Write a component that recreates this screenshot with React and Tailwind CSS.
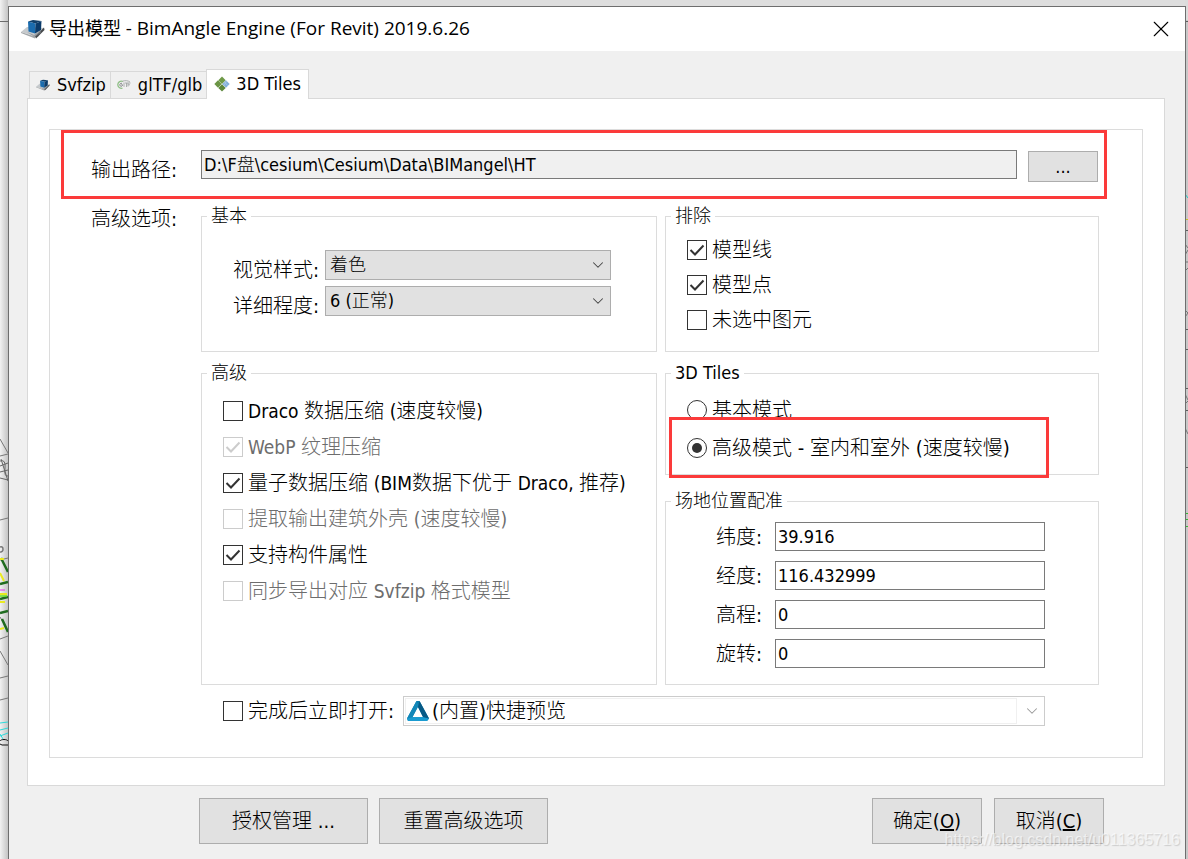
import { useId, useState } from "react";
import { ChevronDown, X } from "lucide-react";

const LATIN = /([A-Za-z0-9(),.\-][A-Za-z0-9(),.\- ]*)/;

// Latin runs are set at their own size next to the Chinese text around them.
function Mixed({ children, latin = "text-[19px]" }) {
  return children.split(LATIN).map((part, i) =>
    i % 2 ? (
      <span key={i} className={latin}>
        {part}
      </span>
    ) : (
      part
    )
  );
}

function CubeIcon({ className }) {
  return (
    <svg viewBox="0 0 24 20" className={className} aria-hidden="true">
      <path d="M0 13 6 8 23 9 17 18Z" fill="#c6cacd" />
      <path d="M0 13 14 17.500 14 19.500 0 14Z" fill="#a2a6a9" />
      <path d="M14 17.500 23 8.500 23.500 11 15 19.500Z" fill="#45494c" />
      <path d="M6 13 13 16 20 11 20 14 13.500 18Z" fill="#7b7f83" opacity=".6" />
      <path d="M7 2.500 12 1 20.500 2 14.500 4.500Z" fill="#12406a" />
      <path d="M7 2.500 14.500 4.500 14 14.500 7.500 12.500Z" fill="#1b6cae" />
      <path d="M14.500 4.500 20.500 2 20 11 14 14.500Z" fill="#0b3b6a" />
    </svg>
  );
}

function GltfIcon({ className }) {
  return (
    <svg viewBox="0 0 14 10" className={className} aria-hidden="true" fill="none">
      <path d="M6 1.500C3 .5.8 2.500.8 4.700S3 8.800 5.500 8.200" stroke="#8fbf86" strokeWidth="1.300" />
      <path d="M5 3.300C3.500 3 2.500 4 2.800 5.200S4.800 6.800 5.500 5.500V4.800H4.300" stroke="#85898a" />
      <path d="M7 2.500V6.800M8 3H11M9.500 3V7M11 6.500V3H13.500M11 4.800H13M5.500 1.200C8 .3 11 .5 13 2" stroke="#a2a6a5" strokeWidth=".9" />
    </svg>
  );
}

function TilesIcon({ className }) {
  return (
    <svg viewBox="0 0 16 16" className={className} aria-hidden="true">
      <path d="M8 .5 11.700 4.200 8 7.900 4.300 4.200Z" fill="#6f9a48" />
      <path d="M4 4.300 7.700 8 4 11.700.3 8Z" fill="#6a9444" />
      <path d="M12 4.300 15.700 8 12 11.700 8.300 8Z" fill="#82b0dc" />
      <path d="M8 8.200 11.700 11.900 8 15.600 4.300 11.900Z" fill="#5c873b" />
      <path d="M10.500 6 13.500 9.500M12.500 5 10 9.500" stroke="#b9d0e4" strokeWidth=".6" />
    </svg>
  );
}

function TriangleIcon({ className }) {
  return (
    <svg viewBox="0 0 24 22" className={className} aria-hidden="true">
      <path d="M10.500 1H13.500L23 18.500 21 21H2L1 18.500ZM12 7 6.500 17H17Z" fillRule="evenodd" fill="#0c7cae" />
      <path d="M10.500 1 1 18.500 6.500 17 12.500 5Z" fill="#1287b8" />
      <path d="M1 18.500 2 21H21L23 18.500 17 17H6.500Z" fill="#1a9bd0" />
      <path d="M12 7 13.500 1 23 18.500 17 17Z" fill="#075a86" />
    </svg>
  );
}

function Backdrop() {
  return (
    <>
      <svg className="absolute left-0 top-0 h-[859px] w-2" viewBox="0 0 8 859" fill="none" aria-hidden="true">
        <defs>
          <linearGradient id="edge">
            <stop offset="0" stopColor="#f2f2f2" />
            <stop offset="1" stopColor="#c4c4c4" />
          </linearGradient>
        </defs>
        <path d="M0 0H8V859H0Z" fill="url(#edge)" />
        <path d="M0 21.500H8" stroke="#6b6b6b" />
        <path d="M0 439 8 453M0 456 8 454M0 520 8 518M0 560 8 558M0 617 5 625M0 639 8 636M0 651 8 665M0 678 8 676M0 700 8 698" stroke="#777" />
        <path d="M0 461Q6 459 5 468T8 476M0 466 8 463M0 472 8 470M1 459 8 481M0 478 8 480" stroke="#666" />
        <path d="M0 547C4 545 4 553 0 552" stroke="#777" strokeWidth="1.500" />
        <path d="M1 558 8 572M0 584 8 582M0 599 8 597M0 613 8 611M2 619 8 632" stroke="#1f6b1f" strokeWidth="2.500" />
        <path d="M0 559H4M0 573 4 581M0 594H7M0 602H5M0 629 4 628" stroke="#eaea20" strokeWidth="2" />
        <path d="M0 590H5" stroke="#e832e8" />
        <path d="M0 596H7" stroke="#63e01c" strokeWidth="1.500" />
        <path d="M0 723 8 722M0 730 8 728M0 736 8 733M0 734 3 739" stroke="#2edada" />
        <path d="M0 741C1 739 7 739 8 741M0 744 2 745H8" stroke="#111" />
      </svg>
      <svg className="absolute right-0 top-0 h-[859px] w-[3px]" viewBox="0 0 3 859" fill="none" aria-hidden="true">
        <path d="M0 0H3V859H0Z" fill="#c8c8c8" />
        <path d="M0 0H3V20H0Z" fill="#dcdcdc" />
        <path d="M0 21.500H3M0 230.500H3M0 329.500H3M0 349.500H3M0 388.500H3M0 410.500H3M0 467.500H3" stroke="#606060" />
        <path d="M0 244 3 248M0 255 3 250M0 262H3M0 271 3 268M0 310 3 313 0 317M0 394 3 400M0 404 3 401M0 428 3 434" stroke="#777" />
        <path d="M0 194 3 198" stroke="#20c8c8" />
        <path d="M0 219.500H3" stroke="#c8c820" />
        <path d="M0 513.500H3M0 519.500H3M0 526.500H3" stroke="#39b939" />
      </svg>
    </>
  );
}

function Group({ title, className = "", children }) {
  return (
    <fieldset className={`min-w-0 border border-[#dcdcdc] ${className}`}>
      <legend className="ml-[5px] px-1 text-[18px] leading-5">{title}</legend>
      {children}
    </fieldset>
  );
}

function Check({ label, defaultChecked, disabled }) {
  return (
    <label className={`flex h-5 items-center gap-[5px] whitespace-nowrap ${disabled ? "text-[#6d6d6d]" : ""}`}>
      <span className="relative flex size-5 shrink-0">
        <input
          type="checkbox"
          defaultChecked={defaultChecked}
          disabled={disabled}
          className="peer size-5 appearance-none border border-[#333] bg-white disabled:border-[#ccc]"
        />
        <svg
          viewBox="0 0 20 20"
          fill="none"
          aria-hidden="true"
          className="pointer-events-none absolute inset-0 hidden stroke-[#333] stroke-2 peer-checked:block peer-disabled:stroke-[#ccc]"
        >
          <path d="M3.500 10 8 14.500 16.500 5.500" />
        </svg>
      </span>
      <span>
        <Mixed>{label}</Mixed>
      </span>
    </label>
  );
}

function Radio({ label, defaultChecked }) {
  return (
    <label className="flex h-5 items-center gap-[5px] whitespace-nowrap">
      <span className="relative flex size-5 shrink-0">
        <input
          type="radio"
          name="mode"
          defaultChecked={defaultChecked}
          className="peer size-5 appearance-none rounded-full border border-[#333] bg-white"
        />
        <span className="pointer-events-none absolute inset-[5px] hidden rounded-full bg-[#333] peer-checked:block" />
      </span>
      <span>
        <Mixed latin="text-[20px]">{label}</Mixed>
      </span>
    </label>
  );
}

function SelectRow({ label, options }) {
  const id = useId();
  return (
    <div className="flex h-[30px] items-end">
      <label htmlFor={id} className="w-[92px] shrink-0 whitespace-nowrap leading-5">
        {label}
      </label>
      <div className="relative h-full flex-1">
        <select id={id} className="size-full appearance-none border border-[#adadad] bg-[#e1e1e1] pl-1 text-[18px]">
          {options.map((o) => (
            <option key={o}>{o}</option>
          ))}
        </select>
        <ChevronDown className="pointer-events-none absolute right-[4px] top-[6px] size-[18px] text-[#444]" strokeWidth={1.4} />
      </div>
    </div>
  );
}

function CoordRow({ label, value }) {
  const id = useId();
  return (
    <div className="flex h-[29px] items-center">
      <label htmlFor={id} className="w-[59px] shrink-0 whitespace-nowrap">
        {label}
      </label>
      <input id={id} defaultValue={value} className="h-full min-w-0 flex-1 border border-[#7a7a7a] bg-white px-[2px] text-[18px]" />
    </div>
  );
}

function PushButton({ className, children }) {
  return (
    <button type="button" className={`border border-[#adadad] bg-[#e1e1e1] ${className}`}>
      {children}
    </button>
  );
}

const TABS = [
  { name: "Svfzip", Icon: CubeIcon, icon: "w-[14px] h-3" },
  { name: "glTF/glb", Icon: GltfIcon, icon: "w-[14px] h-[10px]" },
  { name: "3D Tiles", Icon: TilesIcon, icon: "w-4 h-4" },
];

function Tabs() {
  const [active, setActive] = useState("3D Tiles");
  return (
    <div role="tablist" className="flex h-[30px] items-end pl-[2px]">
      {TABS.map(({ name, Icon, icon }) => {
        const on = name === active;
        return (
          <button
            key={name}
            type="button"
            role="tab"
            aria-selected={on}
            onClick={() => setActive(name)}
            className={
              on
                ? "relative z-10 -mb-px flex h-[30px] items-center gap-[6px] border border-b-0 border-[#d9d9d9] bg-white px-[7px] pb-[2px] text-[18px]"
                : "-mr-px flex h-[27px] items-center gap-[7px] border border-b-0 border-[#d9d9d9] bg-[#f0f0f0] pl-[6px] pr-1 text-[18px]"
            }
          >
            <Icon className={icon} />
            {name}
          </button>
        );
      })}
    </div>
  );
}

export default function App() {
  return (
    <div className="relative flex min-h-screen w-full bg-[#dedede] pl-2 pr-[2px] pt-[6px] font-['DejaVu_Sans_Condensed','Noto_Sans_CJK_SC',sans-serif] text-[20px] font-light leading-[22px] text-black">
      <Backdrop />
      <main className="relative flex min-w-0 flex-1 flex-col border border-b-0 border-[#6e6e6e] bg-[#f0f0f0]">
        <header className="flex h-11 items-center bg-white pl-3 pr-[15px]">
          <CubeIcon className="h-5 w-6" />
          <h1 className="ml-1 flex-1 pb-[2px] font-['Open_Sans','Noto_Sans_CJK_SC',sans-serif] text-[18px] font-normal">
            <Mixed>导出模型 - BimAngle Engine (For Revit) 2019.6.26</Mixed>
          </h1>
          <button type="button" aria-label="关闭">
            <X className="size-[18px] scale-150" strokeWidth={1} />
          </button>
        </header>

        <div className="pl-[18px] pr-5 pt-[17px]">
          <Tabs />
          <section className="border border-[#d9d9d9] bg-white px-[21px] pb-[27px] pt-[30px]">
            <div className="border border-[#dcdcdc] pb-[31px]">
              <div className="ml-[11px] mr-[35px] flex h-[69px] items-start border-[3px] border-[#fb3a3a] pl-[27px] pr-[6px] pt-[17px]">
                <label htmlFor="path" className="w-[110px] shrink-0 pt-[9px]">
                  输出路径:
                </label>
                <input
                  id="path"
                  readOnly
                  defaultValue="D:\F盘\cesium\Cesium\Data\BIMangel\HT"
                  className="h-[29px] min-w-0 flex-1 border border-[#7a7a7a] bg-[#f0f0f0] px-[2px] pb-[3px] text-[18px]"
                />
                <PushButton className="ml-[11px] mt-px h-[31px] w-[70px] text-[18px]">...</PushButton>
              </div>

              <div className="flex pl-[41px] pr-[43px] pt-[7px]">
                <div className="w-[110px] shrink-0 pt-[2px]">高级选项:</div>
                <div className="grid flex-1 grid-cols-[456fr_434fr] gap-x-2">
                  <div className="flex min-w-0 flex-col gap-[11px]">
                    <Group title="基本" className="h-[146px]">
                      <div className="flex flex-col gap-[6px] pl-[31px] pr-[45px] pt-6">
                        <SelectRow label="视觉样式:" options={["着色"]} />
                        <SelectRow label="详细程度:" options={["6 (正常)"]} />
                      </div>
                    </Group>
                    <Group title="高级" className="h-[322px]">
                      <div className="flex flex-col gap-4 pl-[21px] pt-[18px]">
                        <Check label="Draco 数据压缩 (速度较慢)" />
                        <Check label="WebP 纹理压缩" defaultChecked disabled />
                        <Check label="量子数据压缩 (BIM数据下优于 Draco, 推荐)" defaultChecked />
                        <Check label="提取输出建筑外壳 (速度较慢)" disabled />
                        <Check label="支持构件属性" defaultChecked />
                        <Check label="同步导出对应 Svfzip 格式模型" disabled />
                      </div>
                    </Group>
                  </div>
                  <div className="flex min-w-0 flex-col">
                    <Group title="排除" className="h-[146px]">
                      <div className="flex flex-col gap-[15px] pl-[21px] pt-[14px]">
                        <Check label="模型线" defaultChecked />
                        <Check label="模型点" defaultChecked />
                        <Check label="未选中图元" />
                      </div>
                    </Group>
                    <Group title="3D Tiles" className="mt-[11px] h-28">
                      <div className="relative flex flex-col gap-[18px] pl-[21px] pt-[17px]">
                        <Radio label="基本模式" />
                        <Radio label="高级模式 - 室内和室外 (速度较慢)" defaultChecked />
                        <div className="pointer-events-none absolute left-[3px] top-[34px] h-[61px] w-[380px] border-[3px] border-[#fb3a3a]" />
                      </div>
                    </Group>
                    <Group title="场地位置配准" className="mt-4 h-[194px]">
                      <div className="flex flex-col gap-[10px] pl-[50px] pr-[53px] pt-[11px]">
                        <CoordRow label="纬度:" value="39.916" />
                        <CoordRow label="经度:" value="116.432999" />
                        <CoordRow label="高程:" value="0" />
                        <CoordRow label="旋转:" value="0" />
                      </div>
                    </Group>
                  </div>
                </div>
              </div>

              <div className="flex items-center pl-[173px] pr-[97px] pt-[11px]">
                <div className="w-[180px] shrink-0">
                  <Check label="完成后立即打开:" />
                </div>
                <div className="relative h-[30px] flex-1">
                  <select disabled aria-label="打开方式" className="size-full appearance-none border border-[#ccc] bg-white pl-[28px] text-[20px] text-black opacity-100">
                    <option>(内置)快捷预览</option>
                  </select>
                  <span className="pointer-events-none absolute inset-y-[2px] left-[2px] right-7 border border-[#f0f0f0]" />
                  <TriangleIcon className="absolute left-[3px] top-1 h-[22px] w-6" />
                  <ChevronDown className="pointer-events-none absolute right-[4px] top-[6px] size-[18px] text-[#999]" strokeWidth={1.4} />
                </div>
              </div>
            </div>
          </section>
        </div>

        <footer className="flex pb-[15px] pl-[190px] pr-[81px] pt-3">
          <PushButton className="h-[46px] w-[169px]">授权管理 ...</PushButton>
          <PushButton className="ml-[11px] h-[46px] w-[169px]">重置高级选项</PushButton>
          <PushButton className="ml-auto h-[46px] w-[110px]">
            确定(<u>O</u>)
          </PushButton>
          <PushButton className="ml-3 h-[46px] w-[110px]">
            取消(<u>C</u>)
          </PushButton>
        </footer>
      </main>
      <div className="pointer-events-none absolute bottom-2 right-2 font-['Liberation_Sans',sans-serif] text-[16px] font-normal text-white/60 [text-shadow:1px_1px_1px_#9996]">
        https://blog.csdn.net/u011365716
      </div>
    </div>
  );
}
